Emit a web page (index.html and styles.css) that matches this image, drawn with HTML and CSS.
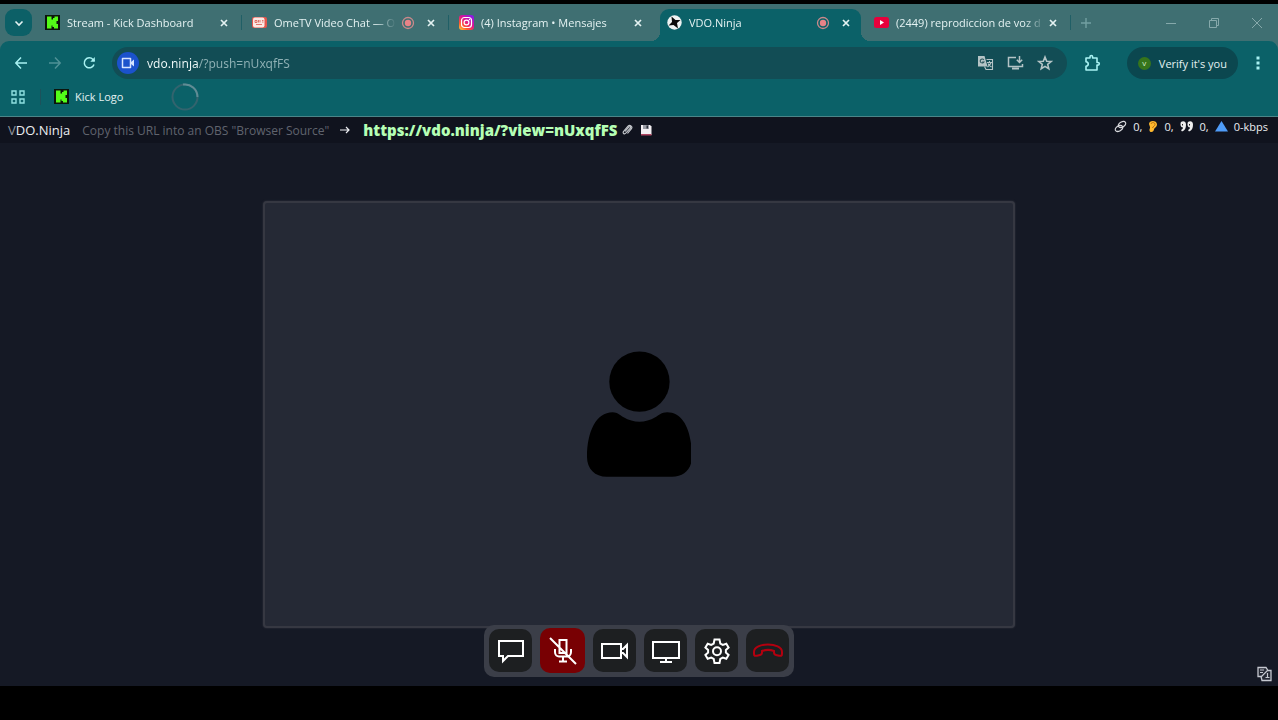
FILE: index.html
```html
<!DOCTYPE html>
<html lang="en">
<head>
    <meta charset="UTF-8">
    <meta name="viewport" content="width=device-width, initial-scale=1.0">
    <title>VDO.Ninja</title>
    <link rel="stylesheet" href="styles.css">
</head>
<body>
    <svg width="0" height="0" class="defs" aria-hidden="true">
        <symbol id="kick" viewBox="0 0 15 15">
            <path fill="#0c140c" d="M0 0h15v15H0z"/>
            <path fill="#53fc18" d="M2 1.500h4.500v3h1.500V3h1.500V1.500H13V6h-1.500v3H13v4.500H9V12H7.500v-1.500H6.500v3H2z"/>
        </symbol>
        <symbol id="close" viewBox="0 0 16 16">
            <path d="M5 5l6 6M11 5l-6 6" stroke="currentColor" stroke-width="1.700" fill="none"/>
        </symbol>
        <symbol id="recording" viewBox="0 0 14 14">
            <circle cx="7" cy="7" r="5.500" fill="none" stroke="#c9898b" stroke-width="1.300"/>
            <circle cx="7" cy="7" r="3.200" fill="#e88387"/>
        </symbol>
    </svg>

    <div class="browser">
        <nav class="tab-strip" aria-label="Tabs">
            <button class="tab-search" type="button" aria-label="Search tabs">
                <svg width="10" height="10" viewBox="0 0 10 10"><path d="M1.500 3.500L5 7l3.500-3.500" fill="none" stroke="currentColor" stroke-width="1.600"/></svg>
            </button>
            <div class="tab">
                <svg class="favicon"><use href="#kick"/></svg>
                <a class="tab-title" href="#">Stream - Kick Dashboard</a>
                <button class="tab-close" type="button" aria-label="Close tab"><svg><use href="#close"/></svg></button>
            </div>
            <div class="tab">
                <svg class="favicon" viewBox="0 0 15 15">
                    <rect y="2" width="15" height="11" rx="2" fill="#e2564d"/>
                    <rect x="1" y="2.500" width="11.500" height="10" rx="2" fill="#fbe9e4"/>
                    <path d="M3 5.500h2v2H3zM6.500 5v2.500M8 5v2.500M10 5.500h1.500M10 7h1.500M4 9.500h6" fill="none" stroke="#d8574c" stroke-width=".8"/>
                </svg>
                <a class="tab-title" href="#">OmeTV Video Chat — O</a>
                <svg class="recording"><use href="#recording"/></svg>
                <button class="tab-close" type="button" aria-label="Close tab"><svg><use href="#close"/></svg></button>
            </div>
            <div class="tab">
                <svg class="favicon" viewBox="0 0 15 15">
                    <defs>
                        <linearGradient id="insta" x1="0" y1="1" x2=".8" y2="0">
                            <stop offset="0" stop-color="#ffd23c"/>
                            <stop offset=".3" stop-color="#ff5a2c"/>
                            <stop offset=".6" stop-color="#e0158e"/>
                            <stop offset="1" stop-color="#8a18e8"/>
                        </linearGradient>
                    </defs>
                    <rect width="15" height="15" rx="3" fill="url(#insta)"/>
                    <rect x="2.500" y="2.500" width="10" height="10" rx="3" fill="none" stroke="#fff" stroke-width="1.200"/>
                    <circle cx="7.500" cy="7.500" r="2.400" fill="none" stroke="#fff" stroke-width="1.200"/>
                    <circle cx="10.500" cy="4.500" r=".7" fill="#fff"/>
                </svg>
                <a class="tab-title" href="#">(4) Instagram • Mensajes</a>
                <button class="tab-close" type="button" aria-label="Close tab"><svg><use href="#close"/></svg></button>
            </div>
            <div class="tab active">
                <svg class="favicon" viewBox="0 0 15 15">
                    <circle cx="7.500" cy="7.500" r="7.200" fill="#eef3f3"/>
                    <path d="M4.500 1.500L8.500 5l5 0-3.500 3 1 5.500L6.500 10l-5 .5L5 7z" fill="#0a0a0a"/>
                </svg>
                <a class="tab-title" href="#">VDO.Ninja</a>
                <svg class="recording"><use href="#recording"/></svg>
                <button class="tab-close" type="button" aria-label="Close tab"><svg><use href="#close"/></svg></button>
            </div>
            <div class="tab">
                <svg class="favicon" viewBox="0 0 15 15">
                    <rect y="2" width="15" height="11" rx="2.500" fill="#e8003c"/>
                    <path d="M6 5l4 2.500L6 10z" fill="#fff"/>
                </svg>
                <a class="tab-title" href="#">(2449) reprodiccion de voz d</a>
                <button class="tab-close" type="button" aria-label="Close tab"><svg><use href="#close"/></svg></button>
            </div>
            <button class="new-tab" type="button" aria-label="New tab">
                <svg width="12" height="12" viewBox="0 0 12 12"><path d="M6 1v10M1 6h10" stroke="currentColor" stroke-width="1.400"/></svg>
            </button>
            <div class="window-buttons">
                <button type="button" aria-label="Minimize"><svg width="12" height="12" viewBox="0 0 12 12"><path d="M1 6.500h10" stroke="currentColor"/></svg></button>
                <button type="button" aria-label="Restore"><svg width="12" height="12" viewBox="0 0 12 12"><path d="M1.500 3.500h7v7h-7zM3.500 3.500v-2h7v7h-2" fill="none" stroke="currentColor"/></svg></button>
                <button type="button" aria-label="Close"><svg width="12" height="12" viewBox="0 0 12 12"><path d="M1 1l10 10M11 1L1 11" stroke="currentColor"/></svg></button>
            </div>
        </nav>

        <div class="toolbar">
            <button class="nav-button" type="button" aria-label="Back">
                <svg width="14" height="14" viewBox="0 0 14 14"><path d="M13 7H2M7 1.500L1.800 7 7 12.500" fill="none" stroke="currentColor" stroke-width="1.500"/></svg>
            </button>
            <button class="nav-button dim" type="button" aria-label="Forward">
                <svg width="14" height="14" viewBox="0 0 14 14"><path d="M1 7h11M7 1.500L12.200 7 7 12.500" fill="none" stroke="currentColor" stroke-width="1.500"/></svg>
            </button>
            <button class="nav-button" type="button" aria-label="Reload">
                <svg width="14" height="14" viewBox="0 0 14 14"><path d="M12 8.500A5 5 0 1 1 11 3.500L12.500 5" fill="none" stroke="currentColor" stroke-width="1.500"/><path d="M12.800 1v4.700H8.300z" fill="currentColor"/></svg>
            </button>
            <div class="omnibox">
                <button class="camera-chip" type="button" aria-label="Camera in use">
                    <svg width="14" height="12" viewBox="0 0 14 12"><path d="M1.500 1.500h8v9h-8z" fill="none" stroke="currentColor" stroke-width="1.500" stroke-linejoin="round"/><path d="M10 5l3-2.500v7L10 7z" fill="currentColor"/></svg>
                </button>
                <input class="address" type="text" aria-label="Address" value="vdo.ninja/?push=nUxqfFS">
                <button type="button" aria-label="Translate">
                    <svg width="17" height="16" viewBox="0 0 17 16"><path d="M1 1h6.500l3 10.500H1z" fill="#b4c4c6"/><path d="M6.800 4.800A2 2 0 1 0 7 7H5.200" fill="none" stroke="#2b565c" stroke-width="1.100"/><path d="M9.500 4.500h6v10H9l-1.500-3M10 7.500h5M12.500 6v1.500M14 7.500c-.5 2-2 3.500-3.500 4.500M11 8.500c.8 1.500 2 2.500 3.500 3.500" fill="none" stroke="#b4c4c6" stroke-width="1.100"/></svg>
                </button>
                <button type="button" aria-label="Install app">
                    <svg width="17" height="16" viewBox="0 0 17 16"><path d="M9 2.500H1.500v9h14V9" fill="none" stroke="currentColor" stroke-width="1.500"/><path d="M5 13.500h7" stroke="currentColor" stroke-width="2"/><path d="M12.500 1v6M9.800 4.800l2.700 2.700 2.700-2.700" fill="none" stroke="currentColor" stroke-width="1.500"/></svg>
                </button>
                <button type="button" aria-label="Bookmark">
                    <svg width="16" height="16" viewBox="0 0 16 16"><path d="M8 2l1.700 4.200 4.500.3-3.500 2.900 1.100 4.400L8 11.400l-3.800 2.400 1.100-4.400L1.800 6.500l4.500-.3z" fill="none" stroke="currentColor" stroke-width="1.600"/></svg>
                </button>
            </div>
            <button class="extensions" type="button" aria-label="Extensions">
                <svg width="18" height="18" viewBox="0 0 18 18"><path d="M3 4h4V2.800a1.300 1.300 0 0 1 2.600 0V4H14v4.500h1a1.300 1.300 0 0 1 0 2.600h-1V16H3v-3.700c3-.5 3-4.200 0-4.600z" fill="none" stroke="currentColor" stroke-width="1.600" stroke-linejoin="round"/></svg>
            </button>
            <button class="profile" type="button"><span class="avatar">v</span>Verify it's you</button>
            <button class="menu" type="button" aria-label="Menu">
                <svg width="4" height="14" viewBox="0 0 4 14"><path d="M.5.500h3v3h-3zM.5 5.500h3v3h-3zM.5 10.500h3v3h-3z" fill="currentColor"/></svg>
            </button>
        </div>

        <div class="bookmarks">
            <button class="apps" type="button" aria-label="Apps">
                <svg width="14" height="14" viewBox="0 0 14 14"><path d="M1 1h4v4H1zM9 1h4v4H9zM1 9h4v4H1zM9 9h4v4H9z" fill="none" stroke="currentColor" stroke-width="1.400"/></svg>
            </button>
            <a class="bookmark" href="#"><svg class="favicon"><use href="#kick"/></svg>Kick Logo</a>
            <svg class="spinner" width="28" height="28" viewBox="0 0 28 28"><circle cx="14" cy="14" r="12.500" fill="none" stroke="#33646e" stroke-width="2"/><path d="M12 1.600A12.500 12.500 0 0 1 26.500 14" fill="none" stroke="#5f8d95" stroke-width="2"/></svg>
        </div>
    </div>

    <main class="page">
        <header class="page-header">
            <a class="brand" href="#"><span>V</span>DO.Ninja</a>
            <span class="hint">Copy this URL into an OBS "Browser Source"</span>
            <svg class="arrow" width="12" height="10" viewBox="0 0 12 10"><path d="M1 5h9M7 2l3 3-3 3" fill="none" stroke="currentColor" stroke-width="1.200"/></svg>
            <a class="view-link" href="#">https://vdo.ninja/?view=nUxqfFS</a>
            <button type="button" aria-label="Copy link">
                <svg width="11" height="12" viewBox="0 0 11 12"><path d="M3 7.500l4-4.500c1-1 2.200 0 1.300 1.200l-4.500 5c-1.500 1.500-3.500-.2-2.200-1.800L6 2.200c1.800-2 5 .2 3.500 2.500L5.500 9.500" fill="none" stroke="#c6c9ce" stroke-width="1.100"/></svg>
            </button>
            <button type="button" aria-label="Save link">
                <svg width="12" height="12" viewBox="0 0 12 12"><path d="M1 1h9l1.500 1.500V11H1z" fill="#f3eff2"/><path d="M3 1h6v4H3z" fill="#9a9ca5"/><path d="M6.500 1.500h1.500v3H6.500z" fill="#2b2e3a"/><path d="M1 10h10.500v1.500H1z" fill="#b04460"/></svg>
            </button>
            <div class="stats">
                <svg width="13" height="13" viewBox="0 0 13 13"><g fill="none" stroke="#d8d9dd" stroke-width="1.200"><ellipse cx="8" cy="4.500" rx="4" ry="2.500" transform="rotate(-30 8 4.500)"/><ellipse cx="5" cy="8.500" rx="4" ry="2.500" transform="rotate(-30 5 8.500)"/></g></svg>
                <span>0,</span>
                <svg width="10" height="13" viewBox="0 0 10 13"><path d="M1 4C1 0 9 0 9 4.500 9 7 6.500 7.500 6 9.500 5.500 12.500 2 12.800 1.500 10.500c-.3-1.500.8-2 .5-3.500z" fill="#ffb92e"/><path d="M3 4c.5-2 4-2 4 .5 0 1.500-2 1.700-2.500 3.500" fill="none" stroke="#b46d12"/></svg>
                <span>0,</span>
                <svg width="14" height="13" viewBox="0 0 14 13"><g fill="#eee"><path d="M1 2c2-1.500 5-.8 5 2.500C6 8 5 10.500 2 11.500L1 10c1.500-.7 2-1.500 2-2.500C.5 7.500 0 4 1 2z"/><path d="M8 2c2-1.500 5-.8 5 2.500C13 8 12 10.500 9 11.500L8 10c1.500-.7 2-1.500 2-2.500C7.500 7.500 7 4 8 2z"/></g><path d="M2.500 4v1.500M9.500 4v1.500" stroke="#222"/></svg>
                <span>0,</span>
                <svg width="13" height="12" viewBox="0 0 13 12"><path d="M6.500 1L13 11.500H0z" fill="#4f9cf8"/></svg>
                <span>0-kbps</span>
            </div>
        </header>

        <section class="stage">
            <div class="video">
                <svg class="person" viewBox="0 0 106 128"><circle cx="53" cy="31" r="30.500"/><path d="M26 62c5 0 7 3 11 5 10 6 22 6 32 0 4-2 6-5 12-5 17 0 25 20 25 45 0 12-8 20-20 20H20C8 127 0 119 0 107c0-25 9-45 26-45z"/></svg>
            </div>
        </section>

        <div class="controls">
            <button type="button" aria-label="Chat">
                <svg viewBox="0 0 32 32"><path d="M4 6h24v15H13l-5 5v-5H4z"/></svg>
            </button>
            <button class="muted" type="button" aria-label="Unmute microphone">
                <svg viewBox="0 0 32 32"><path d="M12.500 5h7v13h-7zM8 14v3c0 3 2 4.500 4 4.500h8c2 0 4-1.500 4-4.500v-3M16 22v4M12 26.500h8M3 3l26 26"/></svg>
            </button>
            <button type="button" aria-label="Camera">
                <svg viewBox="0 0 32 32"><path d="M3 9h19v14H3zM22 14h2l4-4v12l-4-4h-2"/></svg>
            </button>
            <button type="button" aria-label="Share screen">
                <svg viewBox="0 0 32 32"><path d="M3 7h26v16H3zM16 23v4M10 27h12"/></svg>
            </button>
            <button type="button" aria-label="Settings">
                <svg viewBox="0 0 32 32"><path d="M13.500 4.500h5l.8 4 2.500 1.400 3.500-1.200 2.300 3.900-2.700 2.400v2.500l2.700 2.400-2.300 3.900-3.500-1.200-2.500 1.400-.8 4h-5l-.8-4-2.500-1.400-3.500 1.200-2.300-3.900 2.700-2.400V15l-2.700-2.400 2.300-3.900 3.500 1.200 2.500-1.400z"/><circle cx="16" cy="16.200" r="4"/></svg>
            </button>
            <button class="hangup" type="button" aria-label="Hang up">
                <svg viewBox="0 0 32 32"><path d="M2 17c0-10 28-10 28 0v2c0 2-1 2-3 1.700l-3-.7c-2-.5-2-1-2-2.500V16c-4-1.500-8-1.500-12 0v1.500c0 1.500 0 2-2 2.500l-3 .7C3 21 2 21 2 19z"/></svg>
            </button>
        </div>

        <button class="translate" type="button" aria-label="Change language">
            <svg width="15" height="16" viewBox="0 0 15 16"><path d="M1 1.500h8l2 3h3v10H5l-1-4H1z" fill="#252934" stroke="#c5c8d0" stroke-width="1.300"/><path d="M3 4h4M3 6.500h3M4 11l7-7M10.500 7v5M8.500 11.500h4" fill="none" stroke="#c5c8d0" stroke-width="1.200"/></svg>
        </button>
    </main>
</body>
</html>
```
FILE: styles.css
```css
* { box-sizing: border-box; }
body {
    margin: 0;
    padding: 4px 0 34px;
    height: 100vh;
    display: flex;
    flex-direction: column;
    background: #000;
    color: #e4f2f2;
    font-family: "Open Sans", "Noto Sans", sans-serif;
    font-size: 11px;
    overflow: hidden;
}
button { display: flex; align-items: center; justify-content: center; flex: none; padding: 0; border: 0; background: none; color: inherit; font: inherit; cursor: pointer; }
a { color: inherit; text-decoration: none; }
svg { flex: none; display: block; }
.defs { position: absolute; }

/* browser frame */
.browser { background: #3f6f72; border-bottom: 1px solid #4b8588; }
.tab-strip { display: flex; align-items: center; height: 37px; padding-left: 5px; }
.tab-search { width: 27px; height: 27px; margin-right: 3px; border-radius: 9px; background: #0c6067; }
.tab { position: relative; display: flex; align-items: center; flex: 0 1 207px; min-width: 0; height: 27px; padding: 0 10px; }
.tab-title { flex: 1; min-width: 0; margin-left: 7px; overflow: hidden; white-space: nowrap; mask-image: linear-gradient(to left, transparent, #000 20px); }
.favicon { width: 15px; height: 15px; }
.recording { width: 14px; height: 14px; margin: 0 8px 0 5px; }
.tab-close svg { width: 16px; height: 16px; }
/* thin divider between inactive tabs */
.tab:not(.active):not(:has(+ .active))::after { content: ""; position: absolute; right: 0; top: 6px; width: 1px; height: 15px; background: #205f66; }
.tab.active { align-self: flex-end; flex-basis: 201px; height: 32px; margin: 0 3px 0 4px; padding: 0 7px 5px; border-radius: 9px 9px 0 0; background: #0b6168; }
.tab.active::before, .tab.active::after { content: ""; position: absolute; bottom: 0; width: 9px; height: 9px; }
.tab.active::before { left: -9px; background: radial-gradient(circle at 0 0, transparent 9px, #0b6168 9px); }
.tab.active::after { right: -9px; background: radial-gradient(circle at 100% 0, transparent 9px, #0b6168 9px); }
.new-tab { width: 30px; height: 27px; color: #73a0a2; }
.window-buttons { display: flex; margin-left: auto; color: #86a9ab; }
.window-buttons button { width: 43px; height: 32px; }

.toolbar { display: flex; align-items: center; height: 38px; padding: 6px 12px 0 4px; border-radius: 9px 9px 0 0; background: #0b6168; color: #a8f2f2; }
.nav-button { width: 34px; height: 32px; }
.nav-button.dim { color: #4f9196; }
.omnibox { display: flex; align-items: center; flex: 1; gap: 13px; height: 32px; margin-left: 6px; padding: 0 14px 0 5px; border-radius: 16px; background: #124d55; color: #b4c4c6; }
.camera-chip { width: 22px; height: 22px; border-radius: 50%; background: #1b52cc; color: #d5e4ff; }
.address {
    flex: 1;
    min-width: 0;
    margin-left: -5px;
    padding: 0;
    border: 0;
    background: linear-gradient(to right, #f0fafa 52px, #8fb1b5 52px) text;
    color: transparent;
    font: 12px "Noto Sans", sans-serif;
}
.extensions { width: 50px; height: 32px; }
.profile { gap: 8px; height: 32px; margin-left: 10px; padding: 0 11px; border-radius: 16px; background: #0b474f; color: #e4f2f2; }
.avatar { width: 13px; height: 13px; border-radius: 50%; background: #36751c; color: #d9ecc9; font-size: 8px; line-height: 12px; }
.menu { width: 16px; height: 32px; margin-left: 12px; }

.bookmarks { display: flex; align-items: center; height: 37px; padding: 0 0 2px 11px; background: #0b6168; }
.apps { width: 30px; height: 16px; padding-right: 15px; border-right: 1px solid #1c525b; color: #8fe0e0; }
.bookmark { display: flex; align-items: center; gap: 6px; margin-left: 13px; }
.spinner { margin-left: 48px; }

/* vdo.ninja page */
.page { position: relative; display: flex; flex-direction: column; flex: 1; min-height: 0; background: #151925; }
.page-header { display: flex; align-items: center; height: 26px; padding: 0 10px 0 8px; background: #10131e; font-size: 12px; color: #eceef2; }
.brand { font-size: 13px; }
.brand span { color: #8f939c; }
.hint { margin-left: 12px; color: #60646e; }
.arrow { margin: 0 12px 0 10px; }
.view-link { margin-right: 5px; color: #b5ffb5; font-size: 15px; font-weight: 800; }
.page-header button { margin-right: 7px; }
.stats { display: flex; align-items: center; gap: 6px; margin-left: auto; padding-bottom: 8px; font-size: 11px; }

.stage { display: flex; align-items: center; justify-content: center; flex: 1; min-height: 0; }
.video { display: flex; align-items: center; justify-content: center; height: 78.5%; aspect-ratio: 30 / 17; max-width: 96%; border: 2px solid #363842; border-radius: 4px; background: #252935; box-shadow: 0 0 2px #363842; }
.person { height: 30%; fill: #000; }

.controls { position: absolute; left: 50%; bottom: 9px; transform: translateX(-50%); display: flex; align-items: center; gap: 8px; height: 52px; padding: 0 5px 1px; border-radius: 10px; background: #3b3e48; }
.controls button { width: 43px; height: 43px; border-radius: 10px; background: #1d1f21; color: #fff; }
.controls .muted { width: 45px; height: 45px; background: #780003; }
.controls .hangup { color: #b4000f; }
.controls svg { width: 32px; height: 32px; fill: none; stroke: currentColor; stroke-width: 2; }
.translate { position: absolute; right: 6px; bottom: 4px; }
```
